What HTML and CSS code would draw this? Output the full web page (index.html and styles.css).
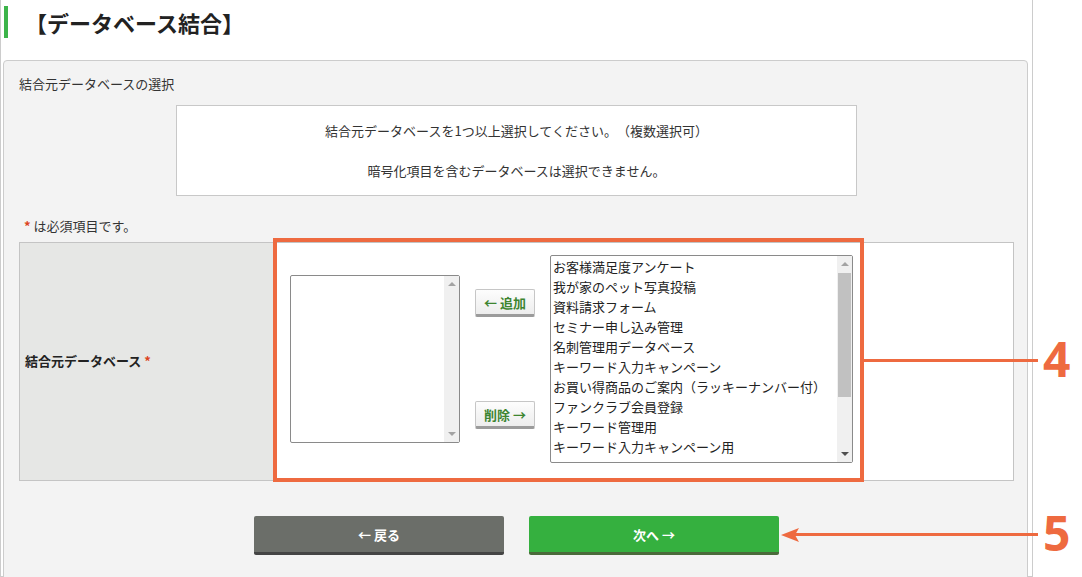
FILE: index.html
```html
<!DOCTYPE html>
<html lang="ja">
<head>
    <meta charset="UTF-8">
    <meta name="viewport" content="width=device-width, initial-scale=1.0">
    <title>データベース結合</title>
    <link rel="stylesheet" href="styles.css">
</head>
<body>

    <div class="page">
        <h1 class="page-title">【データベース結合】</h1>

        <div class="panel">
            <p class="section-title">結合元データベースの選択</p>

            <div class="notice">
                <p>結合元データベースを1つ以上選択してください。（複数選択可）</p>
                <p>暗号化項目を含むデータベースは選択できません。</p>
            </div>

            <p class="required-note"><span class="req">*</span> は必須項目です。</p>

            <table class="form-table">
                <tr>
                    <th>結合元データベース <span class="req">*</span></th>
                    <td>
                        <div class="picker">
                            <div class="listbox listbox-selected">
                                <ul class="items"></ul>
                                <div class="scrollbar">
                                    <span class="arrow-up"></span>
                                    <span class="arrow-down"></span>
                                </div>
                            </div>

                            <div class="move-buttons">
                                <button class="move-btn">← 追加</button>
                                <button class="move-btn">削除 →</button>
                            </div>

                            <div class="listbox listbox-source">
                                <ul class="items">
                                    <li>お客様満足度アンケート</li>
                                    <li>我が家のペット写真投稿</li>
                                    <li>資料請求フォーム</li>
                                    <li>セミナー申し込み管理</li>
                                    <li>名刺管理用データベース</li>
                                    <li>キーワード入力キャンペーン</li>
                                    <li>お買い得商品のご案内（ラッキーナンバー付）</li>
                                    <li>ファンクラブ会員登録</li>
                                    <li>キーワード管理用</li>
                                    <li>キーワード入力キャンペーン用</li>
                                </ul>
                                <div class="scrollbar">
                                    <span class="arrow-up"></span>
                                    <span class="thumb"></span>
                                    <span class="arrow-down dark"></span>
                                </div>
                            </div>
                        </div>
                    </td>
                </tr>
            </table>

            <div class="actions">
                <button class="btn btn-back">← 戻る</button>
                <button class="btn btn-next">次へ →</button>
            </div>
        </div>

        <!-- 説明用の注釈 -->
        <div class="note-box"></div>
        <div class="note-line line-4"></div>
        <div class="note-num num-4">4</div>
        <div class="note-line line-5"></div>
        <svg class="note-arrow" width="18" height="16" viewBox="0 0 18 16">
            <polygon points="0,8 18,1 14,8 18,15" fill="#ee6a40"/>
        </svg>
        <div class="note-num num-5">5</div>
    </div>

</body>
</html>
```

FILE: styles.css
```css
body {
    margin: 0;
    font-family: "Noto Sans CJK JP", "Noto Sans", sans-serif;
    font-size: 13px;
    color: #333;
    background-color: #fff;
    overflow: hidden;
    text-spacing-trim: space-all;
}
ul, p {
    margin: 0;
    padding: 0;
}
.page {
    position: relative;
    width: 1033px;
    height: 577px;
    box-sizing: border-box;
    padding-top: 6px;
    border-left: 1px solid #ccc;
    border-right: 1px solid #ccc;
    border-bottom: 1px solid #ccc;
}
.page-title {
    margin: 0 0 22px 3px;
    height: 32px;
    line-height: 32px;
    border-left: 4px solid #3cb44a;
    padding-left: 17px;
    font-size: 22px;
    font-weight: bold;
    color: #222;
}
.panel {
    margin: 0 4px 0 2px;
    height: 520px;
    box-sizing: border-box;
    background-color: #f3f3f3;
    border: 1px solid #ccc;
    border-radius: 4px 4px 0 0;
    padding: 14px 13px 0 15px;
}
.section-title {
    line-height: 18px;
    color: #333;
}
.notice {
    width: 681px;
    box-sizing: border-box;
    margin: 12px auto 0;
    background-color: #fff;
    border: 1px solid #c8c8c8;
    padding: 16px 0 15px;
    text-align: center;
    line-height: 18px;
}
.notice p + p {
    margin-top: 22px;
}
.required-note {
    margin-top: 21px;
    padding-left: 5px;
    line-height: 18px;
}
.req {
    color: #dc4420;
    font-weight: bold;
}
.form-table {
    margin-top: 7px;
    width: 995px;
    border-collapse: collapse;
    background-color: #fff;
}
.form-table th,
.form-table td {
    border: 1px solid #c4c4c4;
}
.form-table th {
    width: 248px;
    background-color: #e6e7e5;
    text-align: left;
    padding: 0 0 2px 5px;
    font-weight: bold;
    color: #222;
    line-height: 18px;
}
.form-table td {
    padding: 12px 16px 17px 16px;
}
.picker {
    display: flex;
    align-items: center;
    gap: 15px;
}
.listbox {
    position: relative;
    box-sizing: border-box;
    background-color: #fff;
    border: 1px solid #8a8a8a;
    border-radius: 2px;
}
.listbox-selected {
    width: 170px;
    height: 168px;
}
.listbox-source {
    width: 303px;
    height: 208px;
}
.items {
    list-style: none;
    padding: 1px 16px 0 2px;
}
.items li {
    line-height: 20px;
    color: #222;
    white-space: nowrap;
}
.scrollbar {
    position: absolute;
    top: 0;
    right: 0;
    bottom: 0;
    width: 15px;
    background-color: #f0f0f0;
}
.arrow-up,
.arrow-down {
    position: absolute;
    left: 4px;
    width: 0;
    height: 0;
    border-left: 4px solid transparent;
    border-right: 4px solid transparent;
}
.arrow-up {
    top: 6px;
    border-bottom: 4px solid #a3a3a3;
}
.arrow-down {
    bottom: 6px;
    border-top: 4px solid #a3a3a3;
}
.arrow-down.dark {
    border-top-color: #505050;
}
.thumb {
    position: absolute;
    top: 17px;
    left: 1px;
    width: 13px;
    height: 124px;
    background-color: #c1c1c1;
}
.move-buttons {
    display: flex;
    flex-direction: column;
    gap: 84px;
}
.move-btn {
    width: 60px;
    height: 28px;
    padding: 0;
    font-family: inherit;
    font-size: 13px;
    font-weight: bold;
    color: #3d8530;
    background: linear-gradient(#fdfdfd, #ededed);
    border: 1px solid #c6c6c6;
    border-bottom: 3px solid #9b9b9b;
    border-radius: 2px;
    cursor: pointer;
}
.actions {
    display: flex;
    justify-content: center;
    gap: 25px;
    margin-top: 35px;
}
.btn {
    width: 250px;
    height: 39px;
    padding: 0;
    font-family: inherit;
    font-size: 13px;
    font-weight: bold;
    color: #fff;
    border: none;
    border-radius: 2px;
    cursor: pointer;
}
.btn-back {
    background-color: #6b6e69;
    border-bottom: 3px solid #444;
}
.btn-next {
    background-color: #35b03f;
    border-bottom: 3px solid #4a6a3a;
}
.note-box {
    position: absolute;
    left: 272px;
    top: 238px;
    width: 591px;
    height: 244px;
    box-sizing: border-box;
    border: 4px solid #ee6a40;
}
.note-line {
    position: absolute;
    height: 3px;
    background-color: #ee6a40;
}
.line-4 {
    left: 862px;
    top: 359px;
    width: 175px;
}
.line-5 {
    left: 792px;
    top: 533px;
    width: 245px;
}
.note-arrow {
    position: absolute;
    left: 780px;
    top: 527px;
}
.note-num {
    position: absolute;
    left: 1042px;
    font-family: "Noto Sans", sans-serif;
    font-size: 48px;
    font-weight: bold;
    line-height: 48px;
    color: #ee6a40;
}
.num-4 {
    top: 335px;
}
.num-5 {
    top: 509px;
}
```
